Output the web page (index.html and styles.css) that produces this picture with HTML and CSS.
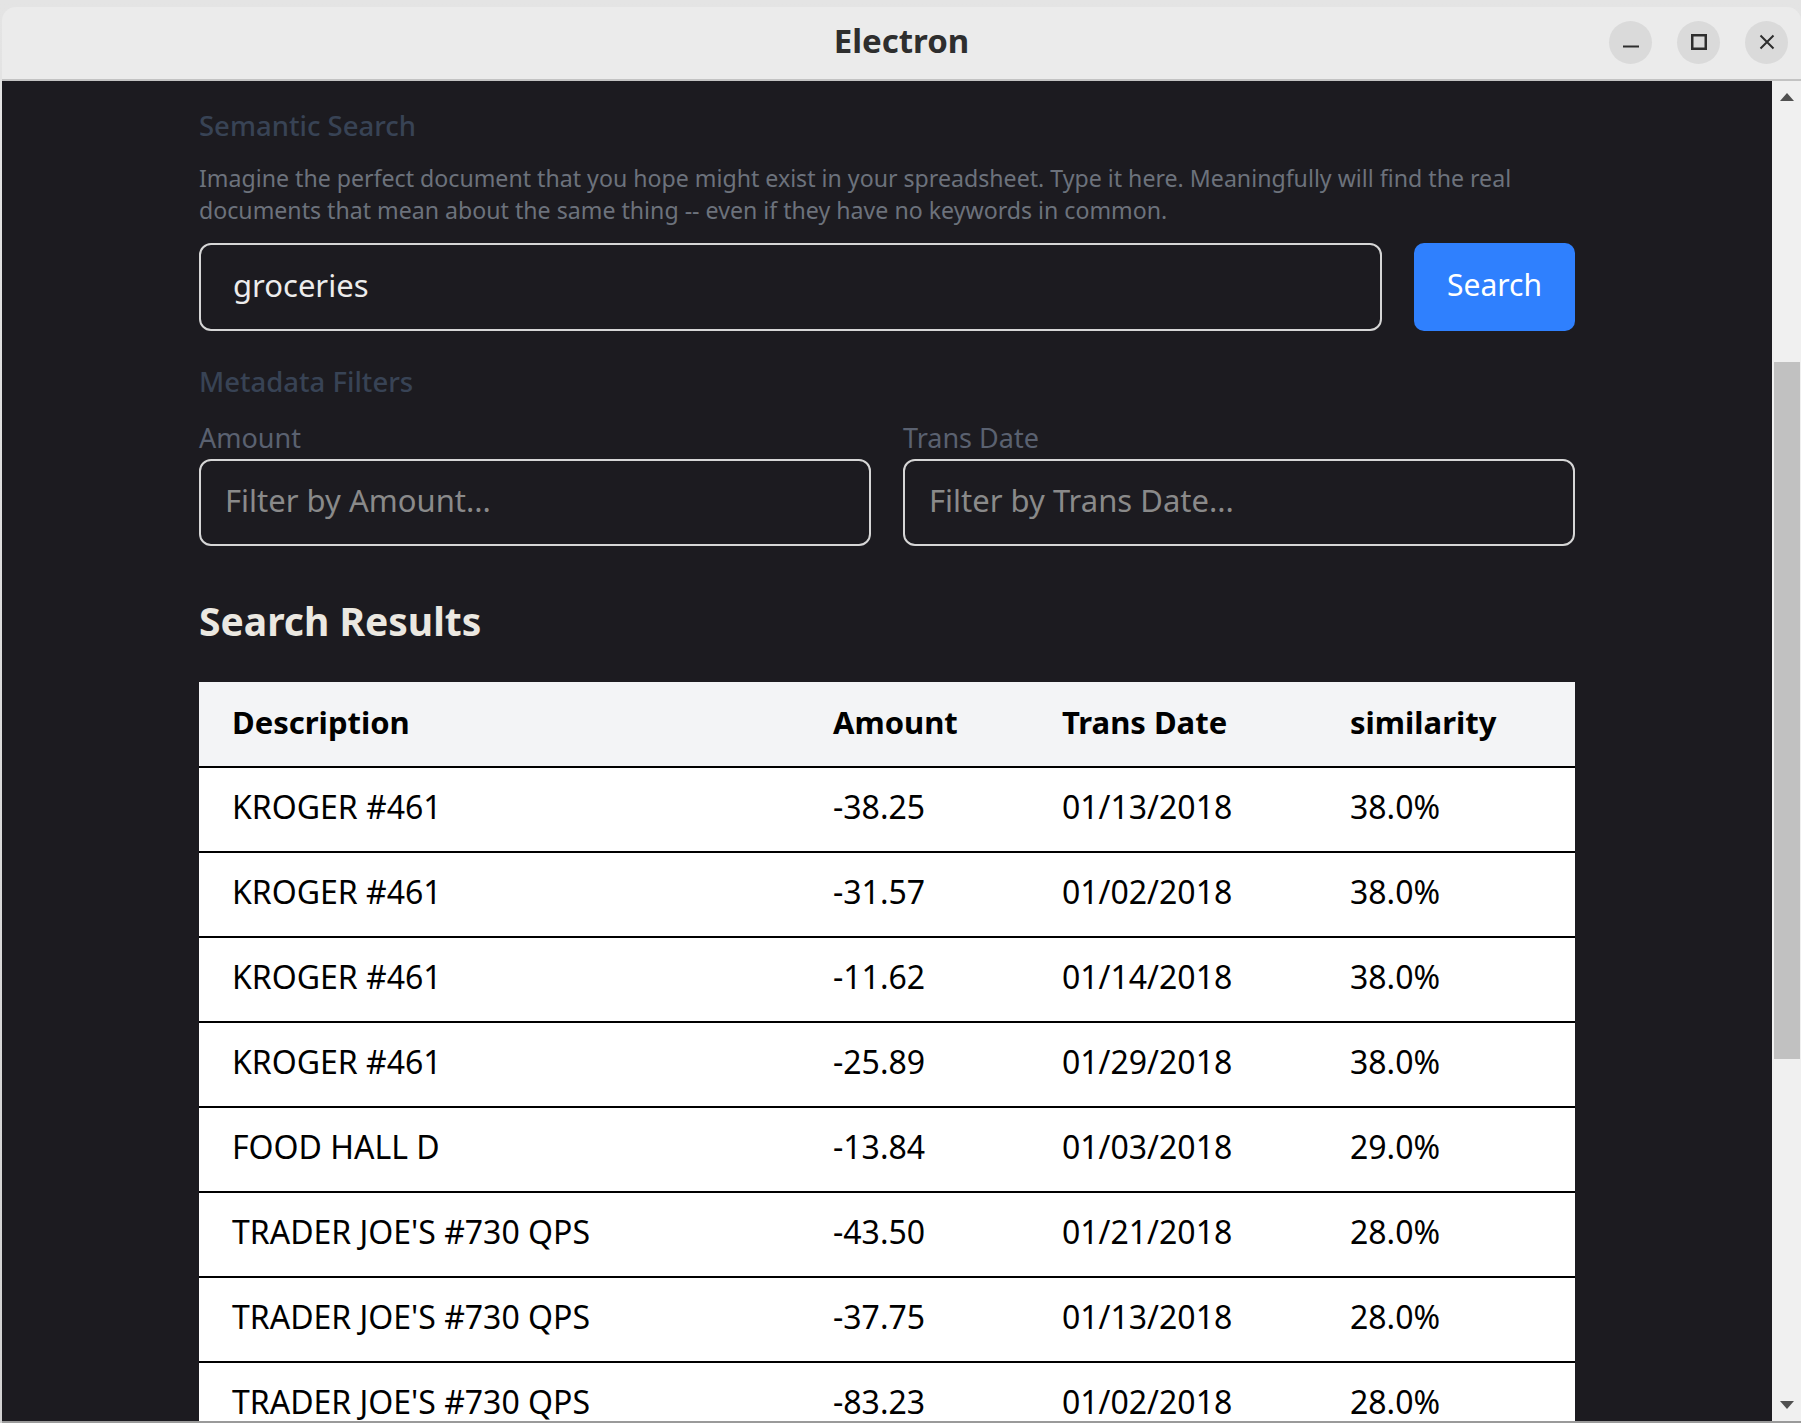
FILE: index.html
```html
<!DOCTYPE html>
<html lang="en">
<head>
<meta charset="utf-8">
<title>Electron</title>
<link rel="stylesheet" href="styles.css">
</head>
<body>
<div class="window">
  <header class="titlebar">
    <div class="tb-spacer"></div>
    <div class="title">Electron</div>
    <div class="controls">
      <button class="wbtn" aria-label="Minimize">
        <svg width="16" height="16" viewBox="0 0 16 16"><rect x="0" y="11.5" width="16" height="2" fill="#2e2e2e"/></svg>
      </button>
      <button class="wbtn" aria-label="Maximize">
        <svg width="16" height="16" viewBox="0 0 16 16"><rect x="1.25" y="1.25" width="13.5" height="13.5" fill="none" stroke="#2e2e2e" stroke-width="2.5"/></svg>
      </button>
      <button class="wbtn" aria-label="Close">
        <svg width="16" height="16" viewBox="0 0 16 16"><path d="M1.5 1.5 L14.5 14.5 M14.5 1.5 L1.5 14.5" stroke="#2e2e2e" stroke-width="2" fill="none"/></svg>
      </button>
    </div>
  </header>
  <div class="client">
    <main class="page">
      <div class="container">
        <section class="search">
          <h2 class="section-label">Semantic Search</h2>
          <p class="desc">Imagine the perfect document that you hope might exist in your spreadsheet. Type it here. Meaningfully will find the real documents that mean about the same thing -- even if they have no keywords in common.</p>
          <div class="search-row">
            <input class="query" type="text" value="groceries">
            <button class="search-btn">Search</button>
          </div>
        </section>
        <section class="filters">
          <h2 class="section-label">Metadata Filters</h2>
          <div class="filter-grid">
            <label class="field">
              <span class="field-label">Amount</span>
              <input class="filter-input" type="text" placeholder="Filter by Amount...">
            </label>
            <label class="field">
              <span class="field-label">Trans Date</span>
              <input class="filter-input" type="text" placeholder="Filter by Trans Date...">
            </label>
          </div>
        </section>
        <h1 class="results-title">Search Results</h1>
        <table class="results">
          <colgroup>
            <col class="c-desc"><col class="c-amt"><col class="c-date"><col class="c-sim">
          </colgroup>
          <thead>
            <tr><th>Description</th><th>Amount</th><th>Trans Date</th><th>similarity</th></tr>
          </thead>
          <tbody>
            <tr><td>KROGER #461</td><td>-38.25</td><td>01/13/2018</td><td>38.0%</td></tr>
            <tr><td>KROGER #461</td><td>-31.57</td><td>01/02/2018</td><td>38.0%</td></tr>
            <tr><td>KROGER #461</td><td>-11.62</td><td>01/14/2018</td><td>38.0%</td></tr>
            <tr><td>KROGER #461</td><td>-25.89</td><td>01/29/2018</td><td>38.0%</td></tr>
            <tr><td>FOOD HALL D</td><td>-13.84</td><td>01/03/2018</td><td>29.0%</td></tr>
            <tr><td>TRADER JOE'S #730 QPS</td><td>-43.50</td><td>01/21/2018</td><td>28.0%</td></tr>
            <tr><td>TRADER JOE'S #730 QPS</td><td>-37.75</td><td>01/13/2018</td><td>28.0%</td></tr>
            <tr><td>TRADER JOE'S #730 QPS</td><td>-83.23</td><td>01/02/2018</td><td>28.0%</td></tr>
            <tr><td>TRADER JOE'S #730 QPS</td><td>-52.10</td><td>01/09/2018</td><td>28.0%</td></tr>
          </tbody>
        </table>
      </div>
    </main>
    <div class="scrollbar">
      <div class="sb-arrow">
        <svg width="14" height="8" viewBox="0 0 14 8"><polygon points="7,0 14,8 0,8" fill="#505050"/></svg>
      </div>
      <div class="sb-track"><div class="sb-thumb"></div></div>
      <div class="sb-arrow">
        <svg width="14" height="8" viewBox="0 0 14 8"><polygon points="0,0 14,0 7,8" fill="#505050"/></svg>
      </div>
    </div>
  </div>
</div>
</body>
</html>
```
FILE: styles.css
```css
* { box-sizing: border-box; }

html, body {
  margin: 0;
  padding: 0;
}

body {
  width: 1801px;
  height: 1423px;
  overflow: hidden;
  background: linear-gradient(#e4e4e4, #d2d2d2);
  font-family: "Noto Sans", "DejaVu Sans", sans-serif;
}

.window {
  margin: 7px 0 0 2px;
  width: 1799px;
  border-bottom: 2px solid #9a9a9a;
}

.titlebar {
  height: 74px;
  background: #ebebeb;
  border-radius: 14px 14px 0 0;
  border-bottom: 2px solid #c3c3c3;
  display: grid;
  grid-template-columns: 1fr auto 1fr;
  align-items: center;
  padding-bottom: 4px;
}

.title {
  font-weight: 700;
  font-size: 33px;
  line-height: 40px;
  color: #2e2e2e;
}

.controls {
  display: flex;
  justify-content: flex-end;
  gap: 25px;
  padding-right: 13px;
  margin-top: 2px;
}

.wbtn {
  width: 43px;
  height: 43px;
  border-radius: 50%;
  border: none;
  background: #dadada;
  padding: 0;
  display: flex;
  align-items: center;
  justify-content: center;
}

.client {
  display: flex;
  height: 1340px;
}

.page {
  flex: 1;
  background: #1c1b20;
  overflow: hidden;
  padding-top: 25px;
}

.container {
  width: 1376px;
  margin: 0 auto;
}

.section-label {
  margin: 0;
  font-size: 27.5px;
  line-height: 40px;
  font-weight: 500;
  color: #384355;
}

.desc {
  margin: 16px 0 0;
  font-size: 23.15px;
  line-height: 32px;
  color: #6c727c;
}

.search-row {
  margin-top: 17px;
  display: flex;
  gap: 32px;
}

.query {
  flex: 1;
  height: 88px;
  background: transparent;
  border: 2px solid #d6d6d6;
  border-radius: 12px;
  padding: 0 32px 5px;
  font-family: inherit;
  font-size: 31px;
  color: #ececec;
  outline: none;
}

.search-btn {
  width: 161px;
  height: 88px;
  border: none;
  border-radius: 10px;
  background: #2f80fe;
  color: #ffffff;
  font-family: inherit;
  font-size: 30px;
  padding: 0 0 5px;
}

.filters {
  margin-top: 31px;
}

.filter-grid {
  margin-top: 16px;
  display: grid;
  grid-template-columns: 1fr 1fr;
  gap: 32px;
}

.field {
  display: flex;
  flex-direction: column;
}

.field-label {
  font-size: 27px;
  line-height: 40px;
  color: #5a6170;
  padding-bottom: 1px;
}

.filter-input {
  height: 87px;
  background: transparent;
  border: 2px solid #d6d6d6;
  border-radius: 12px;
  padding: 0 24px 5px;
  font-family: inherit;
  font-size: 31px;
  color: #ececec;
  outline: none;
}

.filter-input::placeholder {
  color: #8a8a8a;
}

.results-title {
  margin: 47px 0 0;
  font-size: 39px;
  line-height: 56px;
  font-weight: 700;
  color: #ebe8e1;
}

.results {
  margin-top: 33px;
  width: 1376px;
  table-layout: fixed;
  border-collapse: separate;
  border-spacing: 0;
  background: #ffffff;
  color: #000000;
}

.c-desc { width: 601px; }
.c-amt { width: 229px; }
.c-date { width: 288px; }
.c-sim { width: 258px; }

.results th {
  height: 84px;
  padding: 0 0 5px 33px;
  text-align: left;
  font-size: 31px;
  font-weight: 700;
  background: #f3f4f6;
}

.results td {
  height: 85px;
  padding: 0 0 7px 33px;
  border-top: 2px solid #000000;
  font-size: 32px;
  white-space: nowrap;
}

.scrollbar {
  width: 29px;
  background: #f0f0f0;
  display: flex;
  flex-direction: column;
}

.sb-arrow {
  height: 32px;
  display: flex;
  align-items: center;
  justify-content: center;
}

.sb-track {
  flex: 1;
  padding: 0 1px 0 2px;
}

.sb-thumb {
  margin-top: 249px;
  height: 697px;
  background: #c1c1c1;
}
```
